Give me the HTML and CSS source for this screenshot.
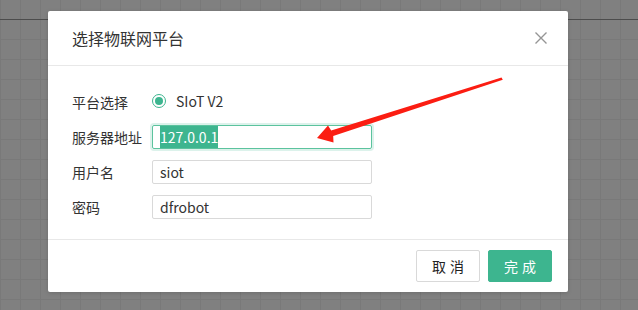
FILE: index.html
```html
<!DOCTYPE html>
<html lang="zh">
<head>
<meta charset="utf-8">
<link rel="stylesheet" href="styles.css">
</head>
<body>
<div class="stage">
  <div class="dialog">
    <div class="dialog-header">
      <span class="dialog-title">选择物联网平台</span>
      <svg class="close" width="12" height="12" viewBox="0 0 12 12"><path d="M0.5 0.5L11.5 11.5M11.5 0.5L0.5 11.5" stroke="#959595" stroke-width="1.4" fill="none"/></svg>
    </div>
    <div class="dialog-body">
      <div class="row">
        <span class="label">平台选择</span>
        <span class="radio"><span class="radio-dot"></span></span>
        <span class="radio-text">SIoT V2</span>
      </div>
      <div class="row">
        <span class="label">服务器地址</span>
        <div class="input focused"><span class="selected">127.0.0.1</span></div>
      </div>
      <div class="row">
        <span class="label">用户名</span>
        <div class="input">siot</div>
      </div>
      <div class="row">
        <span class="label">密码</span>
        <div class="input">dfrobot</div>
      </div>
    </div>
    <div class="dialog-footer">
      <button class="btn btn-cancel">取消</button>
      <button class="btn btn-ok">完成</button>
    </div>
  </div>
  <svg class="arrow" width="638" height="310" viewBox="0 0 638 310">
    <polygon points="317,138 328,125.5 331.2,130.5 501.5,77.5 502.8,79.8 333.2,136 333.5,142.5" fill="#fb1d12"/>
  </svg>
</div>
</body>
</html>
```

FILE: styles.css
```css
html, body {
  margin: 0;
  padding: 0;
}
body {
  font-family: "Noto Sans CJK SC", "Noto Sans", sans-serif;
  color: #333;
}
.stage {
  position: relative;
  width: 638px;
  height: 310px;
  overflow: hidden;
  background-color: #808080;
  background-image:
    linear-gradient(to bottom, transparent 19px, #4c4c4c 19px, #4c4c4c 20px, transparent 20px),
    linear-gradient(to right, #797979 1px, transparent 1px),
    linear-gradient(to bottom, #797979 1px, transparent 1px);
  background-size: 100% 100%, 20px 20px, 20px 20px;
  background-position: 0 0, 0 0, 0 19px;
  background-repeat: no-repeat, repeat, repeat;
  padding-top: 11px;
  box-sizing: border-box;
}
.dialog {
  margin-left: 48px;
  width: 520px;
  background: #fff;
  border-radius: 2px;
  box-shadow: 0 1px 4px rgba(0, 0, 0, 0.15);
}
.dialog-header {
  height: 54px;
  border-bottom: 1px solid #e8e8e8;
  display: flex;
  align-items: center;
  justify-content: space-between;
  padding: 0 21px 0 24px;
}
.dialog-title {
  font-size: 16px;
  color: #333;
  line-height: 22px;
}
.close {
  display: block;
}
.dialog-body {
  padding: 24px 24px 20px;
  display: flex;
  flex-direction: column;
  gap: 11px;
}
.row {
  display: flex;
  align-items: center;
  height: 24px;
  font-size: 14px;
}
.label {
  width: 80px;
  flex: none;
  color: #333;
}
.radio {
  width: 14px;
  height: 14px;
  box-sizing: border-box;
  border: 1px solid #3db58f;
  border-radius: 50%;
  display: flex;
  align-items: center;
  justify-content: center;
  margin-top: -2px;
}
.radio-dot {
  width: 8px;
  height: 8px;
  border-radius: 50%;
  background: #3db58f;
}
.radio-text {
  margin-left: 10px;
  margin-top: -2px;
}
.input {
  width: 220px;
  height: 24px;
  box-sizing: border-box;
  border: 1px solid #d9d9d9;
  border-radius: 2px;
  padding: 0 7px;
  line-height: 22px;
  font-size: 14px;
  color: #333;
}
.input.focused {
  border-color: #5cc39e;
  box-shadow: 0 0 0 2px rgba(61, 181, 143, 0.18);
}
.selected {
  display: inline-block;
  background: #3db58f;
  color: #fff;
  height: 22px;
}
.dialog-footer {
  border-top: 1px solid #e8e8e8;
  padding: 10px 16px 10px;
  display: flex;
  justify-content: flex-end;
  gap: 8px;
}
.btn {
  width: 64px;
  height: 32px;
  font-family: "Noto Sans CJK SC", sans-serif;
  font-size: 14px;
  letter-spacing: 4px;
  text-indent: 4px;
  border-radius: 2px;
  padding: 0;
  cursor: pointer;
}
.btn-cancel {
  background: #fff;
  border: 1px solid #d9d9d9;
  color: #222;
}
.btn-ok {
  background: #3db58f;
  border: 1px solid #3db58f;
  color: #fff;
}
.arrow {
  position: absolute;
  left: 0;
  top: 0;
  pointer-events: none;
}
```
